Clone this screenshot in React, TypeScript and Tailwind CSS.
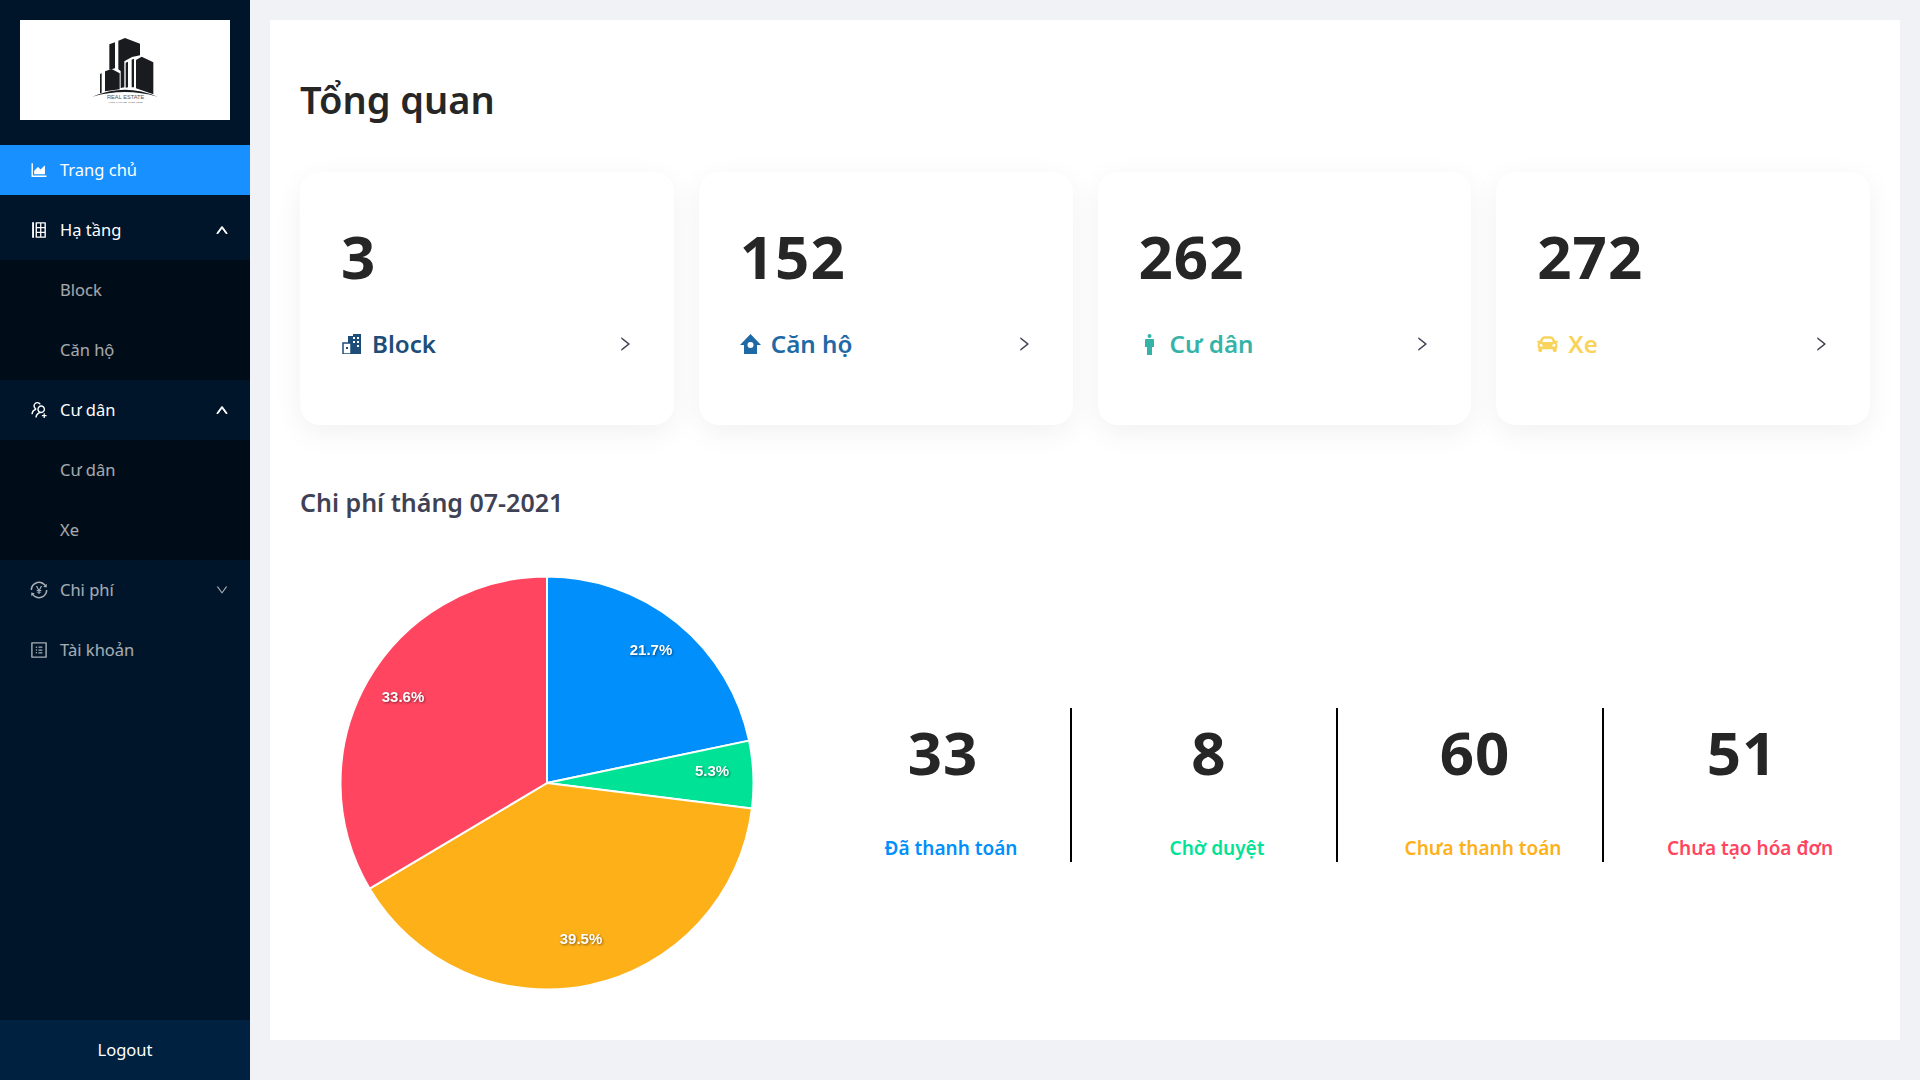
import { ReactNode } from "react";
import {
  AiOutlineAreaChart,
  AiOutlineDown,
  AiOutlineInsertRowLeft,
  AiOutlineProfile,
  AiOutlineRight,
  AiOutlineTransaction,
  AiOutlineUp,
  AiOutlineUsergroupAdd,
} from "react-icons/ai";
import { FaCar } from "react-icons/fa";

const slices = [
  { value: 33, color: "#008ffb" },
  { value: 8, color: "#00e396" },
  { value: 60, color: "#feb019" },
  { value: 51, color: "#ff4560" },
];

const pieLabels = [
  { text: "21.7%", x: 314, y: 78 },
  { text: "5.3%", x: 375, y: 199 },
  { text: "39.5%", x: 244, y: 367 },
  { text: "33.6%", x: 66, y: 125 },
];

function slicePaths() {
  const total = slices.reduce((sum, s) => sum + s.value, 0);
  const cx = 210;
  const cy = 210;
  const r = 206.5;
  let start = 0;
  return slices.map((s) => {
    const end = start + (s.value / total) * Math.PI * 2;
    const x1 = cx + r * Math.sin(start);
    const y1 = cy - r * Math.cos(start);
    const x2 = cx + r * Math.sin(end);
    const y2 = cy - r * Math.cos(end);
    const large = end - start > Math.PI ? 1 : 0;
    start = end;
    return {
      color: s.color,
      d: `M${cx} ${cy} L${x1} ${y1} A${r} ${r} 0 ${large} 1 ${x2} ${y2} Z`,
    };
  });
}

function BuildingIcon() {
  return (
    <svg width={20} height={20} viewBox="0 0 20 20">
      <path fill="currentColor" d="M6 2 L11 2 L11 0 L19 0 L19 20 L6 20 Z" />
      <rect x={1} y={9} width={8} height={11} fill="#fff" stroke="currentColor" strokeWidth={1.5} />
      <rect x={4} y={13} width={2} height={2} fill="currentColor" />
      <g fill="#fff">
        <rect x={11} y={3} width={2} height={2} />
        <rect x={15} y={3} width={2} height={2} />
        <rect x={11} y={7} width={2} height={2} />
        <rect x={15} y={7} width={2} height={2} />
        <rect x={15} y={11} width={2} height={2} />
      </g>
    </svg>
  );
}

function HouseIcon() {
  return (
    <svg width={21} height={20} viewBox="0 0 21 20">
      <path fill="currentColor" d="M10.5 0 L21 11 L17 11 L17 20 L4 20 L4 11 L0 11 Z" />
      <circle cx={10.5} cy={11} r={3} fill="#fff" />
    </svg>
  );
}

function PersonIcon() {
  return (
    <svg width={9} height={21} viewBox="0 0 9 21">
      <circle cx={4.5} cy={2} r={2} fill="currentColor" />
      <path fill="currentColor" d="M1 5 L8 5 Q9 5 9 6 L9 13 L7 13 L7 21 L2 21 L2 13 L0 13 L0 6 Q0 5 1 5 Z" />
    </svg>
  );
}

function Logo() {
  return (
    <div className="mx-5 mt-5 h-[100px] bg-white">
      <svg viewBox="60 60 630 300" className="h-full w-full" fill="#1a1b1f">
        <polygon points="328,133 345,127 345,205 328,209" />
        <polygon points="355,122 375,114 420,131 420,166 396,171 373,184 373,262 362,264 362,213 355,208" />
        <polygon points="315,214 335,207 359,220 359,268 315,274" />
        <polygon points="300,222 305,220 305,278 300,280" />
        <polygon points="377,188 384,185 384,262 377,263" />
        <polygon points="395,179 402,176 402,262 395,262" />
        <polygon points="408,180 425,170 460,187 460,283 408,265" />
        <path d="M277 290 Q375 248 472 290 Q375 262 277 290 Z" />
        <text
          x="377"
          y="298"
          textAnchor="middle"
          fontSize="17"
          fill="#555"
          fontWeight="400"
          fontFamily="Liberation Sans, sans-serif"
        >
          REAL ESTATE
        </text>
        <text
          x="377"
          y="309"
          textAnchor="middle"
          fontSize="6"
          fill="#666"
          fontWeight="700"
          letterSpacing="1"
          fontFamily="Liberation Sans, sans-serif"
        >
          YOUR TAGLINE GOES HERE
        </text>
      </svg>
    </div>
  );
}

function MenuRow({
  icon,
  label,
  open,
  active,
}: {
  icon: ReactNode;
  label: string;
  open?: boolean;
  active?: boolean;
}) {
  return (
    <div
      className={`flex h-[60px] items-center pl-[29px] pr-[21px] text-[16.5px] ${
        active ? "text-white" : "text-white/65"
      }`}
    >
      <span className="w-[31px] text-[20px]">{icon}</span>
      <span className="flex-1">{label}</span>
      {open === true && <AiOutlineUp className="text-[14px] text-white" strokeWidth={70} />}
      {open === false && <AiOutlineDown className="text-[14px]" />}
    </div>
  );
}

function SubRow({ label }: { label: string }) {
  return (
    <div className="flex h-[60px] items-center pl-[60px] text-[16.5px] text-white/65">{label}</div>
  );
}

function Sidebar() {
  return (
    <aside className="flex h-full w-[250px] shrink-0 flex-col bg-[#001529]">
      <Logo />
      <nav className="mt-[25px] flex-1">
        <div className="mb-[5px] flex h-[50px] items-center bg-[#1890ff] pl-[29px] text-[16.5px] text-white">
          <span className="w-[31px] text-[20px]">
            <AiOutlineAreaChart />
          </span>
          Trang chủ
        </div>
        <MenuRow icon={<AiOutlineInsertRowLeft />} label="Hạ tầng" open active />
        <div className="bg-[#000c17]">
          <SubRow label="Block" />
          <SubRow label="Căn hộ" />
        </div>
        <MenuRow icon={<AiOutlineUsergroupAdd />} label="Cư dân" open active />
        <div className="bg-[#000c17]">
          <SubRow label="Cư dân" />
          <SubRow label="Xe" />
        </div>
        <MenuRow icon={<AiOutlineTransaction />} label="Chi phí" open={false} />
        <MenuRow icon={<AiOutlineProfile />} label="Tài khoản" />
      </nav>
      <div className="flex h-[60px] items-center justify-center bg-[#002140] text-[16.5px] text-white">
        Logout
      </div>
    </aside>
  );
}

function StatCard({
  value,
  label,
  icon,
  color,
}: {
  value: number;
  label: string;
  icon: ReactNode;
  color: string;
}) {
  return (
    <div className="h-[253px] rounded-[20px] bg-white pl-[41px] pr-[40px] pt-[54px] shadow-[0_8px_30px_rgba(0,0,0,0.06)]">
      <div className="h-[60px] text-[60px] font-bold leading-[60px] tracking-[1px] text-[#262626]">{value}</div>
      <div className={`mt-[43px] flex h-[30px] items-center text-[24.2px] font-semibold ${color}`}>
        <span className="mr-[10px] flex w-[21px] justify-center text-[24px]">{icon}</span>
        <span className="flex-1">{label}</span>
        <AiOutlineRight className="text-[18px] font-normal text-[#3f4254]" />
      </div>
    </div>
  );
}

function Pie() {
  return (
    <svg width={420} height={420} viewBox="0 0 420 420" className="ml-[37px] shrink-0">
      {slicePaths().map((s) => (
        <path key={s.color} d={s.d} fill={s.color} stroke="#fff" strokeWidth={2} />
      ))}
      {pieLabels.map((l) => (
        <text
          key={l.text}
          x={l.x}
          y={l.y}
          textAnchor="middle"
          dominantBaseline="middle"
          fill="#fff"
          fontSize={15}
          fontWeight={700}
          fontFamily="Liberation Sans, sans-serif"
          className="[filter:drop-shadow(1px_1px_1px_rgba(0,0,0,0.45))]"
        >
          {l.text}
        </text>
      ))}
    </svg>
  );
}

function Summary({
  value,
  label,
  color,
  last,
}: {
  value: number;
  label: string;
  color: string;
  last?: boolean;
}) {
  return (
    <div className={`flex h-[154px] flex-col items-center pt-[14px] ${last ? "" : "border-r-2 border-black"}`}>
      <div className="ml-[10px] h-[60px] text-[60px] font-bold leading-[60px] tracking-[1px] text-[#262626]">{value}</div>
      <div className={`ml-[26px] mt-[51px] whitespace-nowrap text-[19px] font-semibold leading-[30px] ${color}`}>
        {label}
      </div>
    </div>
  );
}

export default function App() {
  return (
    <div className="flex h-screen overflow-hidden bg-[#f0f2f5] font-['Noto_Sans',sans-serif]">
      <Sidebar />
      <main className="m-5 h-[1020px] min-w-0 flex-1 bg-white px-[30px] pt-[49px]">
        <h1 className="flex h-[60px] items-center text-[38px] font-semibold text-[#262626]">Tổng quan</h1>
        <div className="mt-[43px] grid grid-cols-4 gap-[25px]">
          <StatCard value={3} label="Block" icon={<BuildingIcon />} color="text-[#1d4e79]" />
          <StatCard value={152} label="Căn hộ" icon={<HouseIcon />} color="text-[#1f6aa5]" />
          <StatCard value={262} label="Cư dân" icon={<PersonIcon />} color="text-[#36b3a8]" />
          <StatCard value={272} label="Xe" icon={<FaCar />} color="text-[#f9d45c]" />
        </div>
        <h2 className="mt-[58px] flex h-[40px] items-center text-[25px] font-semibold text-[#3f4254]">
          Chi phí tháng 07-2021
        </h2>
        <div className="mt-[50px] flex items-center">
          <Pie />
          <div className="ml-[49px] mt-[4px] grid w-[1064px] shrink-0 grid-cols-4">
            <Summary value={33} label="Đã thanh toán" color="text-[#008ffb]" />
            <Summary value={8} label="Chờ duyệt" color="text-[#00e396]" />
            <Summary value={60} label="Chưa thanh toán" color="text-[#feb019]" />
            <Summary value={51} label="Chưa tạo hóa đơn" color="text-[#ff4560]" last />
          </div>
        </div>
      </main>
    </div>
  );
}
